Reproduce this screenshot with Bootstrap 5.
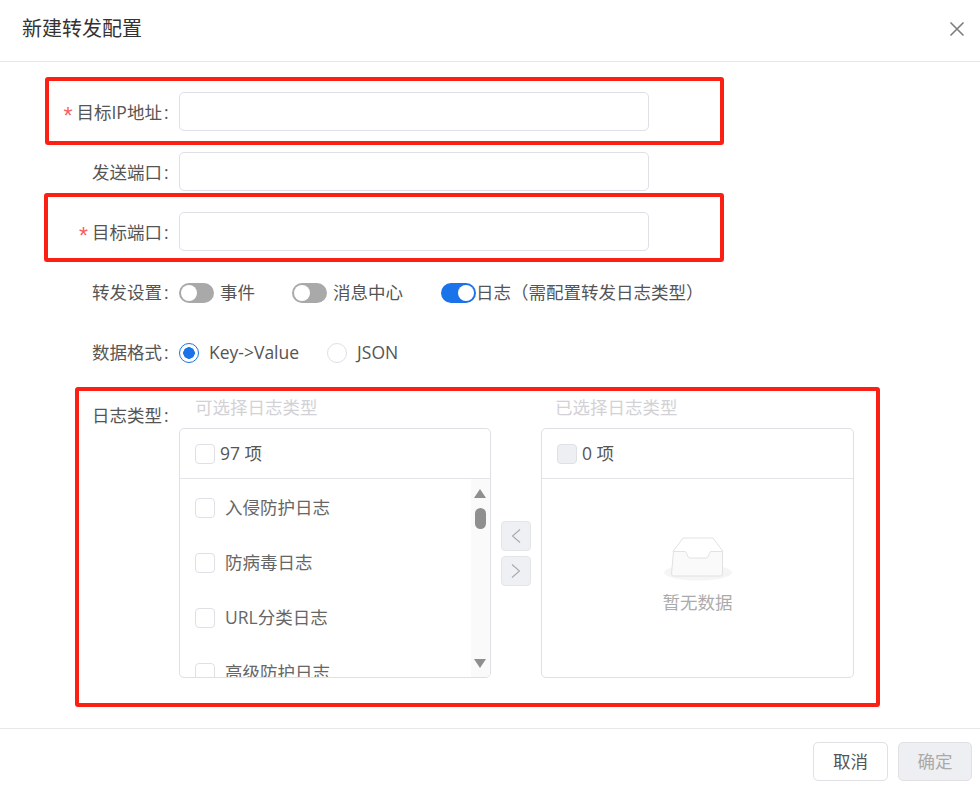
<!DOCTYPE html>
<html lang="zh-CN">
<head>
<meta charset="utf-8">
<title>新建转发配置</title>
<link href="https://cdn.jsdelivr.net/npm/bootstrap@5.3.0/dist/css/bootstrap.min.css" rel="stylesheet">
<style>
html,body{height:791px;overflow:hidden;background:#fff}
body{font-family:"Open Sans","Noto Sans CJK SC",sans-serif;font-size:17.5px;color:#555;line-height:1.3;position:relative}
.dlg-head{height:62px;padding:0 7px 0 22px;border-bottom:1px solid #e8e8ea}
.dlg-title{font-size:20px;color:#333;margin-top:-4px}
.dlg-body{height:666px;padding-top:30px;position:relative}
.dlg-foot{height:63px;border-top:1px solid #e8e8ea;padding:13px 8px 0 0;gap:10px}
.frow{display:flex;align-items:center;height:39px;margin-bottom:21px}
.flabel{width:170px;flex:none;text-align:right;margin-right:9px;white-space:nowrap;padding-top:2px}
.colon{margin:0 1.5px 0 2px}
.star{color:#f8605f;margin-right:4px;font-family:"Liberation Sans",sans-serif;font-size:23px;line-height:0;vertical-align:-5px}
.finput.form-control{width:470px;height:39px;border:1px solid #dfe0e5;border-radius:5px;box-shadow:none;background:#fff}
.sw-wrap{display:flex;align-items:center;padding-top:2px}
.tg{width:35px;height:20px;border-radius:10px;background:#a9a9a9;display:block;position:relative;flex:none}
.tg::after{content:"";position:absolute;left:2px;top:2px;width:16px;height:16px;border-radius:50%;background:#fff}
.tg-on{background:#1a73e8}
.tg-on::after{left:auto;right:2px}
.tg-a{margin-right:6px}
.tg-b{margin-left:37px;margin-right:6px}
.tg-c{margin-left:38px}
.radio-dot.form-check-input{width:20px;height:20px;margin:0;border:1px solid #dfe0e5;background-image:none;flex:none;float:none}
.radio-dot.form-check-input:checked{background-color:#fff;border-color:#1a73e8;background-image:radial-gradient(circle,#1a73e8 0,#1a73e8 5.5px,transparent 6px)}
.radio-dot.rd-b{margin-left:28px}
.rd-a,.rd-c{margin-left:10px}
.ck.form-check-input{width:20px;height:20px;margin:0;border:1px solid #dfe0e5;border-radius:4px;flex:none;float:none}
.ck-dis.form-check-input{background-color:#eeeff2;opacity:1}
.logrow{display:flex;align-items:flex-start}
.loglabel{margin-top:11px;line-height:24px;padding-top:0}
.tcol{flex:none;margin-top:3px}
.tcol-l{width:312px}
.tcol-r{width:313px}
.tcap{color:#d2d2d6;height:33px;line-height:24px;white-space:nowrap}
.tcap-l{padding-left:16px}
.tcap-r{padding-left:14px}
.tpanel{height:250px;border:1px solid #dfe0e5;border-radius:5px;overflow:hidden;position:relative;background:#fff}
.thead{height:50px;border-bottom:1px solid #e4e4e8;padding-left:15px;gap:5px;color:#555}
.titem{height:55px;flex:none;padding-left:15px;gap:10px;color:#666}
.tlist{height:199px;padding-top:1px;overflow:hidden}
.sbar{position:absolute;right:0;top:50px;bottom:0;width:19px;background:#fafafa}
.arrow-up,.arrow-down{position:absolute;left:3px;width:0;height:0;border-left:6.5px solid transparent;border-right:6.5px solid transparent}
.arrow-up{top:10px;border-bottom:9px solid #8f8f8f}
.arrow-down{bottom:9px;border-top:9px solid #8f8f8f}
.sthumb{position:absolute;left:4px;top:29px;width:11px;height:21px;border-radius:5.5px;background:#8f8f8f}
.tmid{width:50px;flex:none;gap:5px;margin-top:129px;align-items:center}
.tbtn{width:30px;height:30px;padding:0;border:1px solid #e4e5e8;border-radius:4px;background:#eff0f3}
.tempty{height:199px;color:#ababab;padding-top:58px}
.tempty svg{display:block;margin-bottom:9px}
.fbtn.btn{width:75px;height:39px;padding:0;font-size:17.5px;border-radius:5px;border:1px solid #e0e0e5;background:#fff;color:#555}
.fbtn-dis.btn{width:74px;background:#eeeff2;color:#aaa;opacity:1}
.closex{width:32px;height:32px;background:none;border:0;padding:0;margin-top:-4px}
.mark-red{position:absolute;border:4px solid #fb2014;border-radius:3px;pointer-events:none}
.m1{left:45px;top:77px;width:679px;height:68px}
.m2{left:44px;top:193px;width:680px;height:69px}
.m3{left:75px;top:387px;width:805px;height:320px}
</style>
</head>
<body>
<div class="dlg-head d-flex align-items-center justify-content-between">
  <div class="dlg-title">新建转发配置</div>
  <button class="closex d-flex align-items-center justify-content-center" type="button" aria-label="关闭">
    <svg width="16" height="16" viewBox="0 0 16 16"><path d="M1.500 1.500L14.500 14.500M14.500 1.500L1.500 14.500" stroke="#7d7d7d" stroke-width="1.600" fill="none"/></svg>
  </button>
</div>
<div class="dlg-body">
  <div class="frow"><div class="flabel"><span class="star">*</span>目标IP地址<span class="colon">:</span></div><input class="form-control finput" type="text"></div>
  <div class="frow"><div class="flabel">发送端口<span class="colon">:</span></div><input class="form-control finput" type="text"></div>
  <div class="frow"><div class="flabel"><span class="star">*</span>目标端口<span class="colon">:</span></div><input class="form-control finput" type="text"></div>
  <div class="frow">
    <div class="flabel">转发设置<span class="colon">:</span></div>
    <div class="sw-wrap">
      <span class="tg tg-a"></span><span>事件</span>
      <span class="tg tg-b"></span><span>消息中心</span>
      <span class="tg tg-on tg-c"></span><span>日志（需配置转发日志类型）</span>
    </div>
  </div>
  <div class="frow">
    <div class="flabel">数据格式<span class="colon">:</span></div>
    <div class="sw-wrap">
      <input class="form-check-input radio-dot" type="radio" name="fmt" checked>
      <span class="rd-a">Key-&gt;Value</span>
      <input class="form-check-input radio-dot rd-b" type="radio" name="fmt">
      <span class="rd-c">JSON</span>
    </div>
  </div>
  <div class="logrow">
    <div class="flabel loglabel">日志类型<span class="colon">:</span></div>
    <div class="tcol tcol-l">
      <div class="tcap tcap-l">可选择日志类型</div>
      <div class="tpanel">
        <div class="thead d-flex align-items-center"><input class="form-check-input ck" type="checkbox"><span>97 项</span></div>
        <div class="tlist d-flex flex-column">
          <div class="titem d-flex align-items-center"><input class="form-check-input ck" type="checkbox"><span>入侵防护日志</span></div>
          <div class="titem d-flex align-items-center"><input class="form-check-input ck" type="checkbox"><span>防病毒日志</span></div>
          <div class="titem d-flex align-items-center"><input class="form-check-input ck" type="checkbox"><span>URL分类日志</span></div>
          <div class="titem d-flex align-items-center"><input class="form-check-input ck" type="checkbox"><span>高级防护日志</span></div>
        </div>
        <div class="sbar"><span class="arrow-up"></span><span class="sthumb"></span><span class="arrow-down"></span></div>
      </div>
    </div>
    <div class="tmid d-flex flex-column">
      <button class="tbtn d-flex align-items-center justify-content-center" type="button" disabled><svg width="10" height="14" viewBox="0 0 10 14"><path d="M9 .500L1.500 7 9 13.500" stroke="#a9a9ae" stroke-width="1.100" fill="none"/></svg></button>
      <button class="tbtn d-flex align-items-center justify-content-center" type="button" disabled><svg width="10" height="14" viewBox="0 0 10 14"><path d="M1 .500L8.500 7 1 13.500" stroke="#a9a9ae" stroke-width="1.100" fill="none"/></svg></button>
    </div>
    <div class="tcol tcol-r">
      <div class="tcap tcap-r">已选择日志类型</div>
      <div class="tpanel">
        <div class="thead d-flex align-items-center"><input class="form-check-input ck ck-dis" type="checkbox" disabled><span>0 项</span></div>
        <div class="tempty d-flex flex-column align-items-center">
          <svg width="70" height="45" viewBox="0 0 70 45">
            <ellipse cx="35" cy="35.500" rx="34" ry="8" fill="#f5f5f5"/>
            <path d="M10 14.500L20 1h30l10 13.500" fill="#fff" stroke="#e2e2e2" stroke-width="1"/>
            <path d="M10.500 14.500H22c2 0 2 6.500 5 6.500h16c3 0 3-6.500 5-6.500h11.500V37a2 2 0 0 1-2 2h-47a2 2 0 0 1-2-2z" fill="#fafafa" stroke="#e2e2e2" stroke-width="1"/>
          </svg>
          <span>暂无数据</span>
        </div>
      </div>
    </div>
  </div>
</div>
<div class="dlg-foot d-flex justify-content-end">
  <button class="btn fbtn" type="button">取消</button>
  <button class="btn fbtn fbtn-dis" type="button">确定</button>
</div>
<div class="mark-red m1"></div>
<div class="mark-red m2"></div>
<div class="mark-red m3"></div>
</body>
</html>
